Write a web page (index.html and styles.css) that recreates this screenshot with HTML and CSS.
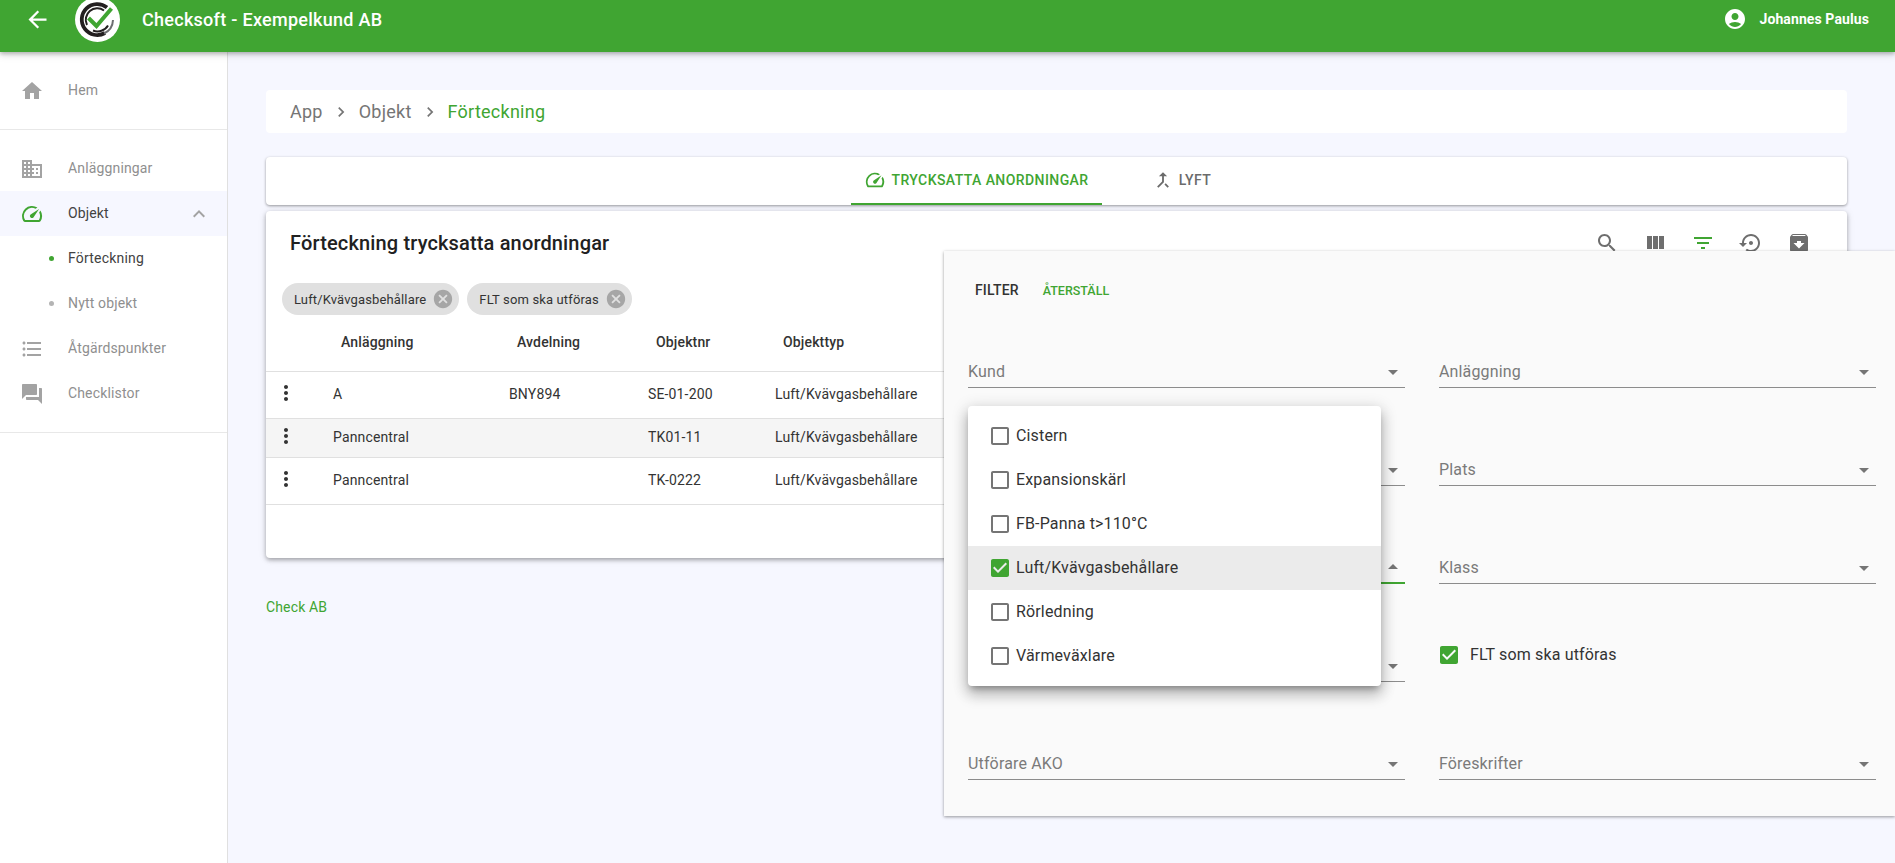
FILE: index.html
```html
<!DOCTYPE html>
<html lang="sv">
<head>
<meta charset="utf-8">
<title>Checksoft - Exempelkund AB</title>
<link rel="stylesheet" href="styles.css">
</head>
<body>
<svg class="defs" width="0" height="0" aria-hidden="true">
  <symbol id="i-back" viewBox="0 0 24 24"><path d="M20 11H7.83l5.59-5.59L12 4l-8 8 8 8 1.41-1.41L7.83 13H20v-2z"/></symbol>
  <symbol id="i-home" viewBox="0 0 24 24"><path d="M10 20v-6h4v6h5v-8h3L12 3 2 12h3v8z"/></symbol>
  <symbol id="i-domain" viewBox="0 0 24 24"><path d="M12 7V3H2v18h20V7H12zM6 19H4v-2h2v2zm0-4H4v-2h2v2zm0-4H4V9h2v2zm0-4H4V5h2v2zm4 12H8v-2h2v2zm0-4H8v-2h2v2zm0-4H8V9h2v2zm0-4H8V5h2v2zm10 12h-8v-2h2v-2h-2v-2h2v-2h-2V9h8v10zm-2-8h-2v2h2v-2zm0 4h-2v2h2v-2z"/></symbol>
  <symbol id="i-speed" viewBox="0 0 24 24"><path d="M20.38 8.57l-1.23 1.85a8 8 0 0 1-.22 7.58H5.07A8 8 0 0 1 15.58 6.85l1.85-1.23A10 10 0 0 0 3.35 19a2 2 0 0 0 1.72 1h13.85a2 2 0 0 0 1.74-1 10 10 0 0 0-.27-10.44zm-9.79 6.84a2 2 0 0 0 2.83 0l5.66-8.49-8.49 5.66a2 2 0 0 0 0 2.83z"/></symbol>
  <symbol id="i-less" viewBox="0 0 24 24"><path d="M12 8l-6 6 1.41 1.41L12 10.83l4.59 4.58L18 14z"/></symbol>
  <symbol id="i-list" viewBox="0 0 24 24"><path d="M4 10.5c-.83 0-1.5.67-1.5 1.5s.67 1.5 1.5 1.5 1.5-.67 1.5-1.5-.67-1.5-1.5-1.5zm0-6c-.83 0-1.5.67-1.5 1.5S3.17 7.5 4 7.5 5.5 6.83 5.5 6 4.83 4.5 4 4.5zm0 12c-.83 0-1.5.68-1.5 1.5s.68 1.5 1.5 1.5 1.5-.68 1.5-1.5-.67-1.5-1.5-1.5zM7 19h14v-2H7v2zm0-6h14v-2H7v2zm0-8v2h14V5H7z"/></symbol>
  <symbol id="i-forum" viewBox="0 0 24 24"><path d="M21 6h-2v9H6v2c0 .55.45 1 1 1h11l4 4V7c0-.55-.45-1-1-1zm-4 6V3c0-.55-.45-1-1-1H3c-.55 0-1 .45-1 1v14l4-4h10c.55 0 1-.45 1-1z"/></symbol>
  <symbol id="i-account" viewBox="0 0 24 24"><path d="M12 2C6.48 2 2 6.48 2 12s4.48 10 10 10 10-4.48 10-10S17.52 2 12 2zm0 4c1.93 0 3.5 1.57 3.5 3.5S13.93 13 12 13s-3.5-1.57-3.5-3.5S10.07 6 12 6zm0 14c-2.03 0-4.43-.82-6.14-2.88C7.55 15.8 9.68 15 12 15s4.45.8 6.14 2.12C16.43 19.18 14.03 20 12 20z"/></symbol>
  <symbol id="i-merge" viewBox="0 0 24 24"><path d="M17 20.41L18.41 19 15 15.59 13.59 17 17 20.41zM7.5 8H11v5.59L5.59 19 7 20.41l6-6V8h3.5L12 3.5 7.5 8z"/></symbol>
  <symbol id="i-search" viewBox="0 0 24 24"><path d="M15.5 14h-.79l-.28-.27C15.41 12.59 16 11.11 16 9.5 16 5.91 13.09 3 9.5 3S3 5.91 3 9.5 5.91 16 9.5 16c1.61 0 3.09-.59 4.23-1.57l.27.28v.79l5 4.99L20.49 19l-4.99-5zm-6 0C7.01 14 5 11.99 5 9.5S7.01 5 9.5 5 14 7.01 14 9.5 11.99 14 9.5 14z"/></symbol>
  <symbol id="i-columns" viewBox="0 0 24 24"><path d="M10 18h5V5h-5v13zm-6 0h5V5H4v13zM16 5v13h5V5h-5z"/></symbol>
  <symbol id="i-filter" viewBox="0 0 24 24"><path d="M10 18h4v-2h-4v2zM3 6v2h18V6H3zm3 7h12v-2H6v2z"/></symbol>
  <symbol id="i-restore" viewBox="0 0 24 24"><path d="M14 12c0-1.1-.9-2-2-2s-2 .9-2 2 .9 2 2 2 2-.9 2-2zm-2-9c-4.97 0-9 4.03-9 9H0l4 4 4-4H5c0-3.87 3.13-7 7-7s7 3.13 7 7-3.13 7-7 7c-1.51 0-2.91-.49-4.06-1.3l-1.42 1.44C8.04 20.3 9.94 21 12 21c4.97 0 9-4.03 9-9s-4.03-9-9-9z"/></symbol>
  <symbol id="i-archive" viewBox="0 0 24 24"><path d="M20.54 5.23l-1.39-1.68C18.88 3.21 18.47 3 18 3H6c-.47 0-.88.21-1.16.55L3.46 5.23C3.17 5.57 3 6.02 3 6.5V19c0 1.1.9 2 2 2h14c1.1 0 2-.9 2-2V6.5c0-.48-.17-.93-.46-1.27zM12 17.5L6.5 12H10v-2h4v2h3.5L12 17.5zM5.12 5l.81-1h12l.94 1H5.12z"/></symbol>
  <symbol id="i-more" viewBox="0 0 24 24"><path d="M12 8c1.1 0 2-.9 2-2s-.9-2-2-2-2 .9-2 2 .9 2 2 2zm0 2c-1.1 0-2 .9-2 2s.9 2 2 2 2-.9 2-2-.9-2-2-2zm0 6c-1.1 0-2 .9-2 2s.9 2 2 2 2-.9 2-2-.9-2-2-2z"/></symbol>
  <symbol id="i-cancel" viewBox="0 0 24 24"><path d="M12 2C6.47 2 2 6.47 2 12s4.47 10 10 10 10-4.47 10-10S17.53 2 12 2zm5 13.59L15.59 17 12 13.41 8.41 17 7 15.59 10.59 12 7 8.41 8.41 7 12 10.59 15.59 7 17 8.41 13.41 12 17 15.59z"/></symbol>
  <symbol id="i-down" viewBox="0 0 24 24"><path d="M7 10l5 5 5-5z"/></symbol>
  <symbol id="i-up" viewBox="0 0 24 24"><path d="M7 14l5-5 5 5z"/></symbol>
  <symbol id="i-next" viewBox="0 0 24 24"><path d="M10 6L8.59 7.41 13.17 12l-4.58 4.59L10 18l6-6z"/></symbol>
  <symbol id="i-box" viewBox="0 0 24 24"><path d="M19 5v14H5V5h14m0-2H5c-1.1 0-2 .9-2 2v14c0 1.1.9 2 2 2h14c1.1 0 2-.9 2-2V5c0-1.1-.9-2-2-2z"/></symbol>
  <symbol id="i-checked" viewBox="0 0 24 24"><path d="M19 3H5c-1.11 0-2 .9-2 2v14c0 1.1.89 2 2 2h14c1.11 0 2-.9 2-2V5c0-1.1-.89-2-2-2zm-9 14l-5-5 1.41-1.41L10 14.17l7.59-7.59L19 8l-9 9z"/></symbol>
</svg>

<header class="topbar">
  <svg class="ico back"><use href="#i-back"/></svg>
  <svg class="logo" viewBox="0 0 45 45">
    <circle cx="22.5" cy="22.5" r="22.5" fill="#fff"/>
    <path d="M32 10.5A15.5 15.5 0 1 0 30 36" fill="none" stroke="#231f20" stroke-width="3.8"/>
    <path d="M29 13.5A11.5 11.5 0 0 0 12 28" fill="none" stroke="#231f20" stroke-width="2"/>
    <path d="M18 33.5a12 12 0 0 0 15-5" fill="none" stroke="#231f20" stroke-width="2"/>
    <path d="M29 36.5A15.5 15.5 0 0 0 38 23" fill="none" stroke="#6d6e71" stroke-width="2"/>
    <path d="M13.5 21l8 8L36.5 11.5" fill="none" stroke="#fff" stroke-width="5.8"/>
    <path d="M13.5 21l8 8L36.5 11.5" fill="none" stroke="#40a532" stroke-width="4"/>
  </svg>
  <span class="brand">Checksoft - Exempelkund AB</span>
  <span class="user"><svg class="ico"><use href="#i-account"/></svg><span class="user-name">Johannes Paulus</span></span>
</header>

<div class="shell">
  <nav class="sidebar">
    <ul class="nav-group">
      <li class="nav-item"><svg class="ico"><use href="#i-home"/></svg><span>Hem</span></li>
    </ul>
    <ul class="nav-group">
      <li class="nav-item"><svg class="ico"><use href="#i-domain"/></svg><span>Anläggningar</span></li>
      <li class="nav-item open"><svg class="ico"><use href="#i-speed"/></svg><span>Objekt</span><svg class="ico chevron"><use href="#i-less"/></svg></li>
      <li class="nav-item sub current"><i class="bullet"></i><span>Förteckning</span></li>
      <li class="nav-item sub"><i class="bullet"></i><span>Nytt objekt</span></li>
      <li class="nav-item"><svg class="ico"><use href="#i-list"/></svg><span>Åtgärdspunkter</span></li>
      <li class="nav-item"><svg class="ico"><use href="#i-forum"/></svg><span>Checklistor</span></li>
    </ul>
  </nav>

  <main class="content">
    <div class="crumbs">
      <span>App</span><svg class="ico sep"><use href="#i-next"/></svg>
      <span>Objekt</span><svg class="ico sep"><use href="#i-next"/></svg>
      <span class="crumb-current">Förteckning</span>
    </div>

    <div class="tabs">
      <div class="tab active"><svg class="ico"><use href="#i-speed"/></svg><span>Trycksatta anordningar</span></div>
      <div class="tab"><svg class="ico"><use href="#i-merge"/></svg><span>Lyft</span></div>
    </div>

    <section class="card">
      <div class="card-head">
        <h1 class="card-title">Förteckning trycksatta anordningar</h1>
        <div class="tools">
          <svg class="ico"><use href="#i-search"/></svg>
          <svg class="ico"><use href="#i-columns"/></svg>
          <svg class="ico on"><use href="#i-filter"/></svg>
          <svg class="ico"><use href="#i-restore"/></svg>
          <svg class="ico"><use href="#i-archive"/></svg>
        </div>
      </div>
      <div class="chips">
        <span class="chip">Luft/Kvävgasbehållare<svg class="ico"><use href="#i-cancel"/></svg></span>
        <span class="chip">FLT som ska utföras<svg class="ico"><use href="#i-cancel"/></svg></span>
      </div>
      <div class="row head">
        <span></span><span>Anläggning</span><span>Avdelning</span><span>Objektnr</span><span>Objekttyp</span>
      </div>
      <div class="row tall">
        <svg class="ico more"><use href="#i-more"/></svg><span>A</span><span>BNY894</span><span>SE-01-200</span><span>Luft/Kvävgasbehållare</span>
      </div>
      <div class="row hover">
        <svg class="ico more"><use href="#i-more"/></svg><span>Panncentral</span><span></span><span>TK01-11</span><span>Luft/Kvävgasbehållare</span>
      </div>
      <div class="row tall">
        <svg class="ico more"><use href="#i-more"/></svg><span>Panncentral</span><span></span><span>TK-0222</span><span>Luft/Kvävgasbehållare</span>
      </div>
    </section>

    <footer class="foot">Check AB</footer>
  </main>
</div>

<aside class="filter">
  <div class="filter-head"><span class="filter-title">Filter</span><span class="filter-reset">Återställ</span></div>
  <div class="fields">
    <div class="field"><span>Kund</span><svg class="ico"><use href="#i-down"/></svg></div>
    <div class="field"><span>Anläggning</span><svg class="ico"><use href="#i-down"/></svg></div>
    <div class="field"><span></span><svg class="ico"><use href="#i-down"/></svg></div>
    <div class="field"><span>Plats</span><svg class="ico"><use href="#i-down"/></svg></div>
    <div class="field focus"><span></span><svg class="ico"><use href="#i-up"/></svg></div>
    <div class="field"><span>Klass</span><svg class="ico"><use href="#i-down"/></svg></div>
    <div class="field"><span></span><svg class="ico"><use href="#i-down"/></svg></div>
    <label class="flt"><svg class="ico"><use href="#i-checked"/></svg><span>FLT som ska utföras</span></label>
    <div class="field"><span>Utförare AKO</span><svg class="ico"><use href="#i-down"/></svg></div>
    <div class="field"><span>Föreskrifter</span><svg class="ico"><use href="#i-down"/></svg></div>
  </div>
  <ul class="menu">
    <li class="menu-item"><svg class="ico"><use href="#i-box"/></svg><span>Cistern</span></li>
    <li class="menu-item"><svg class="ico"><use href="#i-box"/></svg><span>Expansionskärl</span></li>
    <li class="menu-item"><svg class="ico"><use href="#i-box"/></svg><span>FB-Panna t&gt;110°C</span></li>
    <li class="menu-item selected"><svg class="ico"><use href="#i-checked"/></svg><span>Luft/Kvävgasbehållare</span></li>
    <li class="menu-item"><svg class="ico"><use href="#i-box"/></svg><span>Rörledning</span></li>
    <li class="menu-item"><svg class="ico"><use href="#i-box"/></svg><span>Värmeväxlare</span></li>
  </ul>
</aside>
</body>
</html>
```
FILE: styles.css
```css
* { box-sizing: border-box; }
html, body { height: 100%; }
body {
  margin: 0;
  height: 863px;
  overflow: hidden;
  position: relative;
  font-family: Roboto, "Liberation Sans", sans-serif;
  font-size: 14px;
  letter-spacing: .15px;
  color: #333;
  background: #f6f7ff;
}
ul { list-style: none; margin: 0; padding: 0; }
.defs { position: absolute; }
.ico { width: 24px; height: 24px; fill: currentColor; flex: none; display: block; }

/* top bar */
.topbar {
  position: relative;
  z-index: 2;
  height: 52px;
  padding: 0 26px 14px;
  display: flex;
  align-items: center;
  color: #fff;
  background: #40a532;
  box-shadow: 0 2px 4px rgba(0,0,0,.25), 0 4px 8px rgba(0,0,0,.08);
}
.back { width: 27px; height: 27px; margin-left: -2px; }
.logo { width: 45px; height: 45px; margin-left: 24px; flex: none; }
.brand { margin-left: 22px; font-size: 18px; font-weight: 500; letter-spacing: .28px; }
.user { margin-left: auto; display: flex; align-items: center; gap: 12px; }
.user-name { font-size: 14px; font-weight: 700; letter-spacing: .1px; }

.shell { display: flex; height: 811px; }

/* side navigation */
.sidebar {
  width: 228px;
  flex: none;
  background: #fff;
  border-right: 1px solid #e0e0e0;
}
.nav-group { padding: 16px 0; border-bottom: 1px solid #e8e8e8; }
.nav-item {
  height: 45px;
  padding-left: 20px;
  display: flex;
  align-items: center;
  gap: 24px;
  color: #8f8f8f;
}
.nav-item > span { padding-bottom: 1px; }
.nav-item .ico { color: #a3a3a3; }
.nav-item.open { background: #f6f7ff; color: #424242; }
.nav-item.open > .ico:first-child { color: #40a532; }
.nav-item .chevron { margin-left: auto; margin-right: 16px; color: #a3a3a3; }
.nav-item.sub { padding-left: 49px; gap: 14px; }
.nav-item.current { color: #424242; letter-spacing: .2px; }
.bullet { width: 5px; height: 5px; border-radius: 50%; background: #b4b4b4; flex: none; }
.current .bullet { background: #40a532; }

/* main column */
.content { flex: 1; min-width: 0; padding: 38px 48px 0 38px; }
.crumbs {
  height: 43px;
  padding-left: 24px;
  display: flex;
  align-items: center;
  gap: 8px;
  font-size: 18px;
  letter-spacing: .25px;
  color: #757575;
  background: #fff;
  border-radius: 4px;
}
.crumbs .sep { width: 20px; height: 20px; }
.crumb-current { color: #40a532; }

.tabs {
  height: 48px;
  margin-top: 24px;
  display: flex;
  justify-content: center;
  background: #fff;
  border-radius: 4px;
  box-shadow: 0 1px 3px rgba(0,0,0,.4);
}
.tab {
  min-width: 160px;
  padding: 0 13px 2px;
  display: flex;
  align-items: center;
  justify-content: center;
  gap: 5px;
  font-size: 14px;
  font-weight: 500;
  letter-spacing: .42px;
  text-transform: uppercase;
  color: #6b6b6b;
}
.tab .ico { width: 22px; height: 22px; }
.tab.active { color: #40a532; border-bottom: 2px solid #40a532; padding-bottom: 0; }

.card {
  height: 347px;
  margin-top: 6px;
  background: #fff;
  border-radius: 4px;
  box-shadow: 0 2px 4px rgba(0,0,0,.3), 0 1px 8px rgba(0,0,0,.1);
}
.card-head { height: 64px; padding: 0 36px 0 24px; display: flex; align-items: center; justify-content: space-between; }
.card-title { margin: 0; font-size: 20px; font-weight: 500; color: #212121; letter-spacing: .15px; }
.tools { display: flex; gap: 24px; color: #6e6e6e; }
.tools .on { color: #40a532; }
.chips { margin-top: 8px; padding-left: 16px; display: flex; gap: 8px; }
.chip {
  height: 32px;
  padding: 0 5px 0 12px;
  display: flex;
  align-items: center;
  gap: 6px;
  font-size: 13px;
  letter-spacing: .14px;
  color: #333;
  background: #e0e0e0;
  border-radius: 16px;
}
.chip .ico { width: 22px; height: 22px; color: #a6a6a6; }

.row {
  display: grid;
  grid-template-columns: 67px 176px 139px 127px 1fr;
  align-items: center;
  border-bottom: 1px solid #e0e0e0;
  height: 39px;
}
.row > span { padding-bottom: 2px; }
.row > .more { margin: -4px 0 0 8px; color: #333; }
.row.tall { height: 47px; }
.row.hover { background: #f5f5f5; }
.row.head { height: 57px; padding-bottom: 2px; font-weight: 500; }
.row.head > span { padding: 0 0 0 8px; }
.foot { margin-top: 41px; color: #40a532; }

/* filter panel */
.filter {
  position: absolute;
  z-index: 3;
  top: 251px;
  left: 944px;
  right: 0;
  height: 565px;
  padding: 0 19px 0 24px;
  background: #fafafa;
  box-shadow: 0 1px 3px rgba(0,0,0,.4);
}
.filter-head { height: 78px; padding-left: 7px; display: flex; align-items: center; gap: 24px; font-weight: 500; text-transform: uppercase; }
.filter-title { font-size: 14px; color: #333; }
.filter-reset { font-size: 12.5px; letter-spacing: 0; color: #40a532; }
.fields {
  margin-top: 27px;
  display: grid;
  grid-template-columns: 437px 437px;
  column-gap: 34px;
  row-gap: 66px;
  grid-auto-rows: 32px;
}
.field {
  display: flex;
  align-items: center;
  justify-content: space-between;
  font-size: 16px;
  color: #7a7a7a;
  border-bottom: 1px solid #8c8c8c;
}
.field .ico { color: #757575; }
.field.focus { border-bottom: 2px solid #40a532; }
.flt { display: flex; align-items: center; gap: 9px; height: 24px; margin: -7px 0 0 -2px; font-size: 16px; color: #333; }
.flt > span { padding-bottom: 1px; }
.flt .ico { color: #40a532; }

.menu {
  position: absolute;
  top: 155px;
  left: 24px;
  width: 413px;
  padding: 8px 0;
  background: #fff;
  border-radius: 4px;
  box-shadow: 0 5px 6px -3px rgba(0,0,0,.3), 0 9px 14px 1px rgba(0,0,0,.18), 0 3px 16px 2px rgba(0,0,0,.14);
}
.menu-item { height: 44px; padding-left: 20px; display: flex; align-items: center; gap: 4px; font-size: 16px; color: #333; }
.menu-item > span { padding-bottom: 1px; }
.menu-item .ico { color: #757575; }
.menu-item.selected { background: #ebebeb; }
.menu-item.selected .ico { color: #40a532; }
```
